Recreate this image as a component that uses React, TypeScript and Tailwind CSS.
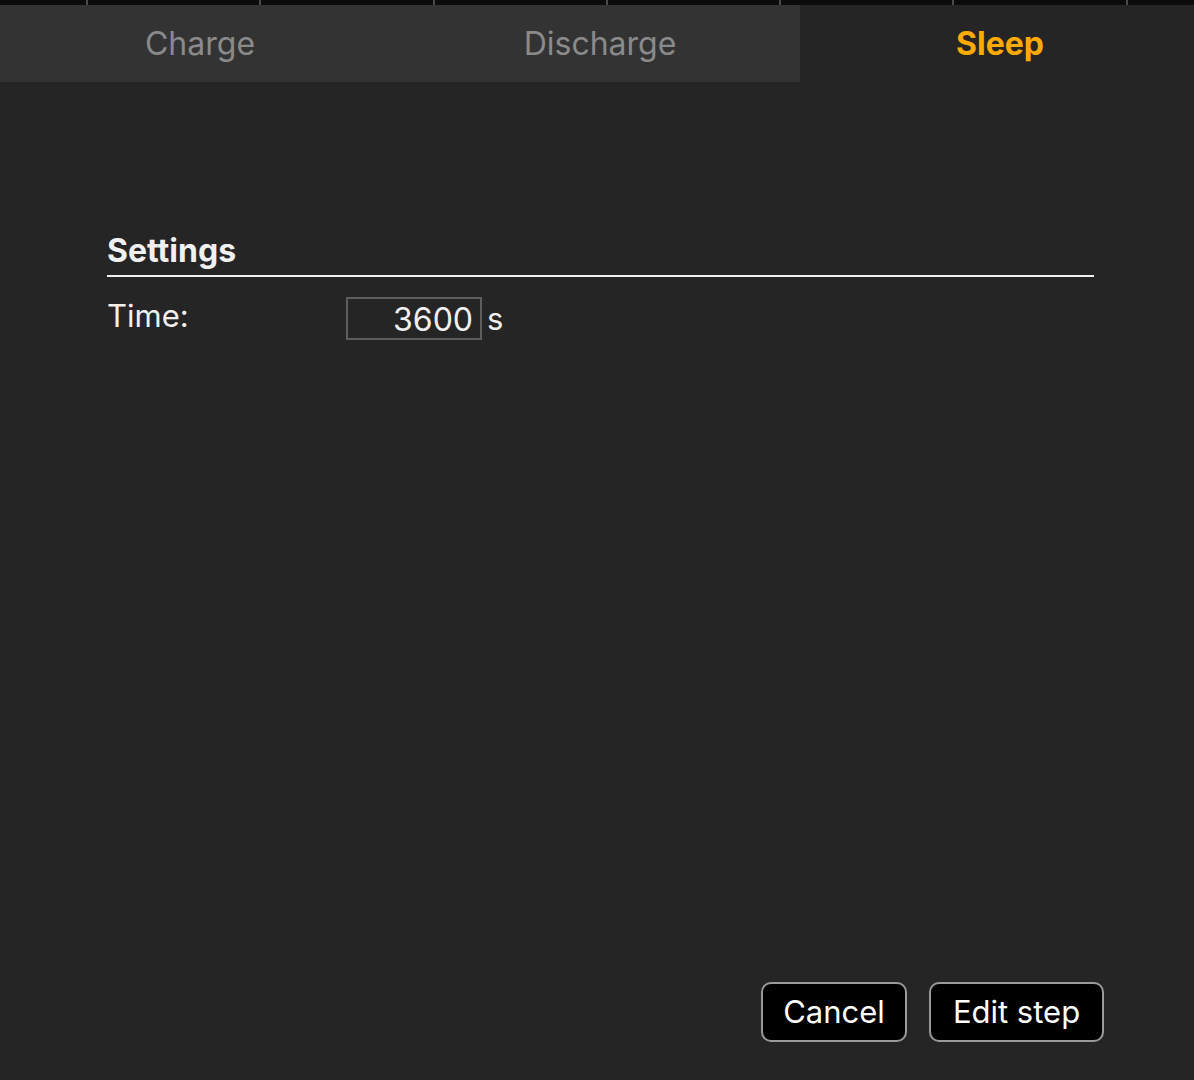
export default function App() {
    const segments = [0, 1, 2, 3, 4, 5, 6];

    return (
        <div
            className="flex h-[1080px] flex-col overflow-hidden bg-[#252525]"
            style={{ fontFamily: 'Inter, "Noto Sans", sans-serif' }}
        >
            {/* top strip */}
            <div className="flex h-[5px] bg-[#0b0b0b]">
                <div className="w-[86px] shrink-0" />
                {segments.map((i) => (
                    <div
                        key={i}
                        className="w-[173.3px] shrink-0 border-l-2 border-[#4a4a4a]"
                    />
                ))}
            </div>

            {/* tabs */}
            <div className="flex h-[77px] overflow-hidden">
                <div className="flex w-[400px] shrink-0 items-center justify-center bg-[#333333] text-[32px] text-[#8a8a8a]">
                    Charge
                </div>
                <div className="flex w-[400px] shrink-0 items-center justify-center bg-[#333333] text-[32px] text-[#8a8a8a]">
                    Discharge
                </div>
                <div className="flex w-[400px] shrink-0 items-center justify-center text-[32px] font-bold text-[#ffaa00]">
                    Sleep
                </div>
            </div>

            {/* settings */}
            <div className="pl-[107px] pr-[100px] pt-[150px]">
                <h2 className="border-b-2 border-[#f0f0f0] pb-[5px] text-[32px] font-bold leading-[38px] text-[#f0f0f0]">
                    Settings
                </h2>
                <div className="mt-[20px] flex items-start">
                    <div className="w-[239px] pt-[1px] text-[31px] leading-[36px] text-[#f0f0f0]">
                        Time:
                    </div>
                    <div className="flex items-end">
                        <div className="flex h-[43px] w-[136px] items-center justify-end border-2 border-[#5e5e5e] pr-[7px] pt-[3px] text-[32px] leading-none text-[#f0f0f0]">
                            3600
                        </div>
                        <span className="ml-[5px] pb-[6px] text-[31px] leading-none text-[#f0f0f0]">
                            s
                        </span>
                    </div>
                </div>
            </div>

            {/* actions */}
            <div className="mt-auto flex justify-end gap-[22px] pb-[38px] pr-[90px]">
                <button className="flex h-[60px] w-[146px] items-center justify-center rounded-[10px] border-2 border-[#9a9a9a] bg-black text-[31px] text-white">
                    Cancel
                </button>
                <button className="flex h-[60px] w-[175px] items-center justify-center rounded-[10px] border-2 border-[#9a9a9a] bg-black text-[31px] text-white">
                    Edit step
                </button>
            </div>
        </div>
    );
}
